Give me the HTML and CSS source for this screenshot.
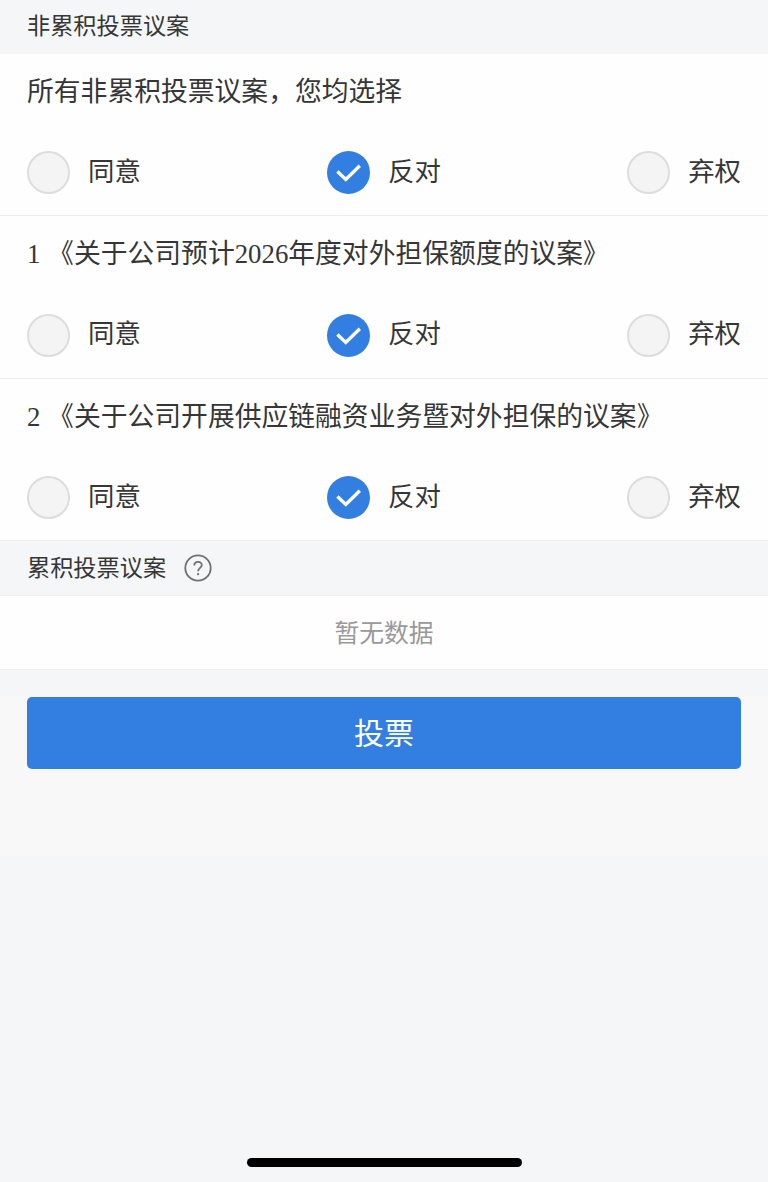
FILE: index.html
```html
<!DOCTYPE html>
<html lang="zh-CN">
<head>
  <meta charset="UTF-8" />
  <meta name="viewport" content="width=device-width, initial-scale=1.0" />
  <title>投票</title>
  <link rel="stylesheet" href="styles.css">
</head>
<body>
  <div class="page">
    <!-- 非累积投票 -->
    <h2 class="section-title first">非累积投票议案</h2>

    <div class="proposal">
      <p class="proposal-title">所有非累积投票议案，您均选择</p>
      <div class="options">
        <div class="option"><span class="radio"></span><span class="label">同意</span></div>
        <div class="option">
          <svg class="radio checked" viewBox="0 0 43 43"><path d="M10.4 20.6 L18.8 28.4 L32.8 14.8" /></svg>
          <span class="label">反对</span>
        </div>
        <div class="option"><span class="radio"></span><span class="label">弃权</span></div>
      </div>
    </div>

    <div class="proposal">
      <p class="proposal-title">1 <span class="mark open">《</span>关于公司预计2026年度对外担保额度的议案<span class="mark close">》</span></p>
      <div class="options">
        <div class="option"><span class="radio"></span><span class="label">同意</span></div>
        <div class="option">
          <svg class="radio checked" viewBox="0 0 43 43"><path d="M10.4 20.6 L18.8 28.4 L32.8 14.8" /></svg>
          <span class="label">反对</span>
        </div>
        <div class="option"><span class="radio"></span><span class="label">弃权</span></div>
      </div>
    </div>

    <div class="proposal">
      <p class="proposal-title">2 <span class="mark open">《</span>关于公司开展供应链融资业务暨对外担保的议案<span class="mark close">》</span></p>
      <div class="options">
        <div class="option"><span class="radio"></span><span class="label">同意</span></div>
        <div class="option">
          <svg class="radio checked" viewBox="0 0 43 43"><path d="M10.4 20.6 L18.8 28.4 L32.8 14.8" /></svg>
          <span class="label">反对</span>
        </div>
        <div class="option"><span class="radio"></span><span class="label">弃权</span></div>
      </div>
    </div>

    <!-- 累积投票 -->
    <h2 class="section-title">
      <span>累积投票议案</span>
      <svg class="help" viewBox="0 0 28 28">
        <circle cx="14" cy="14" r="12.7" />
        <path d="M10.3 11.4 C10.3 6.6 17.8 6.7 17.8 11.1 C17.8 13.9 14.1 14 14.1 17.3" />
        <circle class="dot" cx="14.1" cy="20.2" r="1.1" />
      </svg>
    </h2>
    <div class="empty">暂无数据</div>

    <div class="actions">
      <button class="submit" type="button">投票</button>
    </div>

    <div class="home-bar"></div>
  </div>
</body>
</html>
```

FILE: styles.css
```css
* {
  box-sizing: border-box;
}

body {
  margin: 0;
  background: #f5f6f8;
  color: #363636;
  font-family: "Liberation Serif", "Noto Sans CJK SC", sans-serif;
}

.page {
  display: flex;
  flex-direction: column;
  height: 1182px;
}

.section-title {
  display: flex;
  align-items: center;
  gap: 18px;
  height: 55px;
  margin: 0;
  padding: 0 27px;
  border-bottom: 1px solid #eeeff0;
  font-size: 23.2px;
  font-weight: 400;
  line-height: 54px;
}

.section-title.first {
  height: 53.5px;
  padding-bottom: 1.5px;
  border-bottom: none;
}

.help {
  width: 28px;
  height: 28px;
  fill: none;
  stroke: #707070;
  stroke-width: 1.8;
}

.help .dot {
  fill: #707070;
  stroke: none;
}

.proposal {
  height: 162.5px;
  padding: 18px 27px 0;
  background: #fefefe;
  border-bottom: 1px solid #eeeeef;
}

.proposal-title {
  margin: 0;
  font-size: 26.8px;
  line-height: 40px;
  white-space: nowrap;
}

/* 书名号略收窄 */
.mark {
  display: inline-block;
  transform: scaleX(0.94);
}

.mark.open {
  transform-origin: right center;
}

.mark.close {
  transform-origin: left center;
}

.options {
  display: flex;
  justify-content: space-between;
  margin-top: 39.8px;
}

.option {
  display: flex;
  align-items: center;
  gap: 18px;
  height: 43px;
}

.radio {
  width: 43px;
  height: 43px;
  background: #f4f4f4;
  border: 2px solid #dddddd;
  border-radius: 50%;
}

.radio.checked {
  background: #327fe1;
  border: none;
  fill: none;
  stroke: #ffffff;
  stroke-width: 3.4;
}

.label {
  padding-bottom: 2px;
  font-size: 26.4px;
  line-height: 40px;
}

.empty {
  height: 74px;
  background: #fefefe;
  border-bottom: 1px solid #eeeff0;
  color: #999999;
  font-size: 24.8px;
  line-height: 75px;
  text-align: center;
}

.actions {
  height: 186px;
  padding: 27px 27px 0;
  background: linear-gradient(#f5f6f8 26px, #f8f8f8 26px);
}

.submit {
  display: block;
  width: 100%;
  height: 72px;
  padding: 2px 0 0;
  background: #327fe1;
  border: none;
  border-radius: 5px;
  color: #ffffff;
  font-family: inherit;
  font-size: 30px;
  line-height: 70px;
}

.home-bar {
  width: 275px;
  height: 9px;
  margin: auto auto 15px;
  background: #000000;
  border-radius: 5px;
}
```
